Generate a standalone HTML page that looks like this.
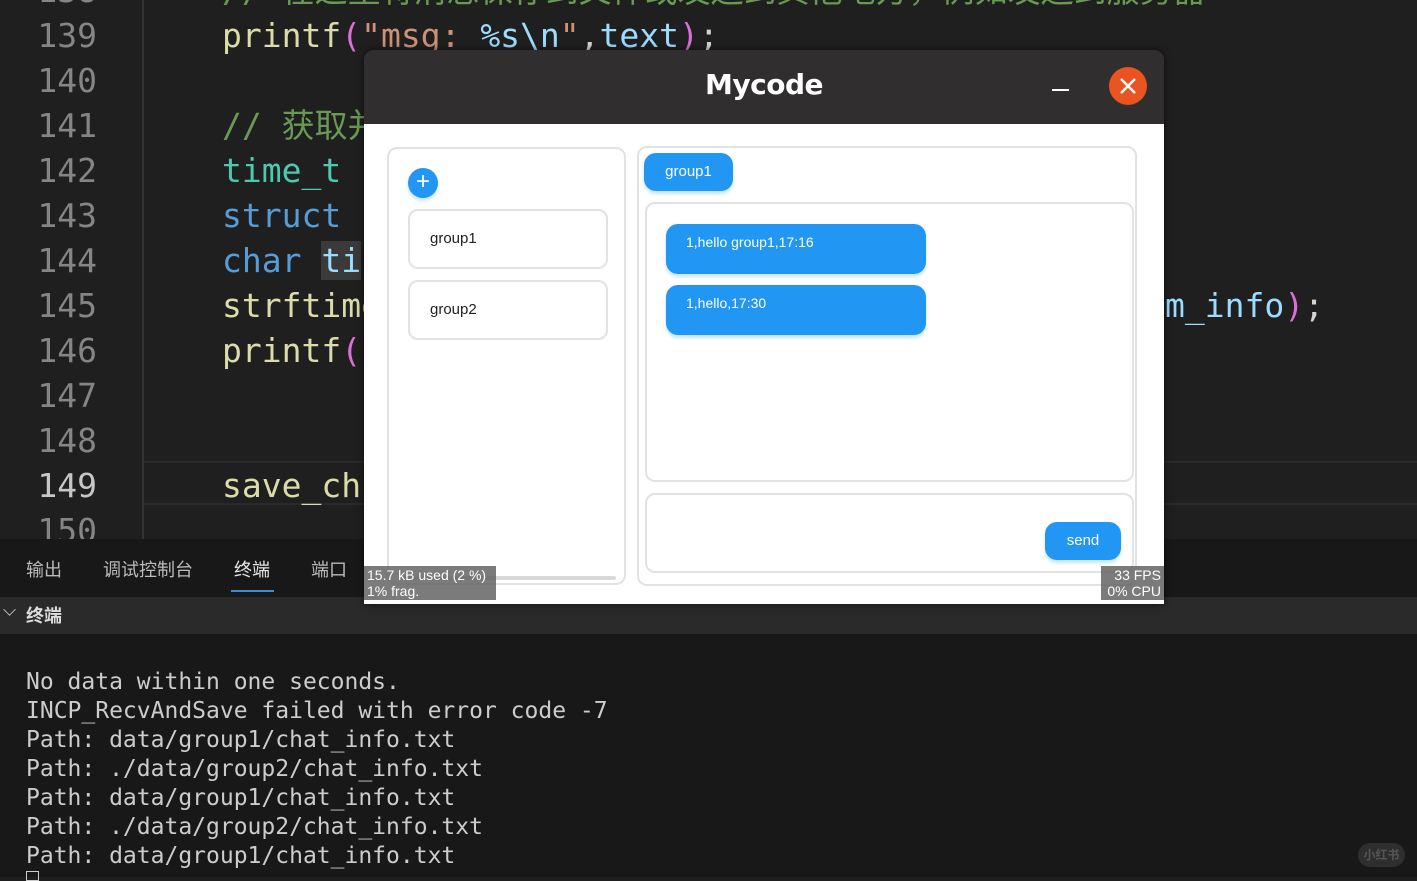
<!DOCTYPE html>
<html><head><meta charset="utf-8"><style>
*{margin:0;padding:0;box-sizing:border-box}
body{width:1417px;height:877px;overflow:hidden;background:#1f1f1f;position:relative;font-family:"Liberation Sans","Noto Sans CJK SC",sans-serif}
.abs{position:absolute}
.ln{position:absolute;left:0;width:97px;text-align:right;font:33px "DejaVu Sans Mono",monospace;color:#858585;line-height:45px}
.cd{position:absolute;left:222px;font:33px "DejaVu Sans Mono","Noto Sans CJK SC",monospace;line-height:45px;white-space:pre;color:#d4d4d4}
.fn{color:#dcdcaa}.st{color:#ce9178}.pp{color:#da70d6}.vr{color:#9cdcfe}.cm{color:#6a9955}.ty{color:#4ec9b0}.kw{color:#569cd6}
.term{position:absolute;left:26px;font:23px "DejaVu Sans Mono",monospace;color:#cccccc;line-height:29px;white-space:pre}
.box{position:absolute;border:2px solid #e2e2e2;border-radius:10px;background:#fff}
.btn{position:absolute;background:#2196f3;color:#fff;border-radius:12px;font-size:15px;box-shadow:0 3px 3px rgba(33,150,243,.25)}
.ov{position:absolute;background:rgba(100,100,100,.85);color:#fff;font-size:14px;line-height:16px;padding:1px 3px}
</style></head><body>
<div class="abs" style="left:142px;top:0;width:2px;height:540px;background:#333"></div>
<div class="abs" style="left:144px;top:461px;width:1273px;height:44px;border-top:2px solid #2a2a2a;border-bottom:2px solid #2a2a2a"></div>
<div class="ln" style="top:-32px">138</div>
<div class="ln" style="top:13px">139</div>
<div class="ln" style="top:58px">140</div>
<div class="ln" style="top:103px">141</div>
<div class="ln" style="top:148px">142</div>
<div class="ln" style="top:193px">143</div>
<div class="ln" style="top:238px">144</div>
<div class="ln" style="top:283px">145</div>
<div class="ln" style="top:328px">146</div>
<div class="ln" style="top:373px">147</div>
<div class="ln" style="top:418px">148</div>
<div class="ln" style="top:463px;color:#c6c6c6">149</div>
<div class="ln" style="top:508px;height:31px;overflow:hidden">150</div>
<div class="cd cm" style="top:-32px">// 在这里将消息保存到文件或发送到其他地方，例如发送到服务器</div>
<div class="cd" style="top:13px"><span class="fn">printf</span><span class="pp">(</span><span class="st">"msg: </span><span class="vr">%s\n</span><span class="st">"</span>,<span class="vr">text</span><span class="pp">)</span>;</div>
<div class="cd cm" style="top:103px">// 获取并格式化当前时间</div>
<div class="cd ty" style="top:148px">time_t</div>
<div class="cd kw" style="top:193px">struct</div>
<div class="cd" style="top:238px"><span class="kw">char</span> <span class="vr" style="background:#3a3a3a">ti</span></div>
<div class="cd fn" style="top:283px">strftime</div>
<div class="cd" style="top:283px;left:1165px"><span class="vr">m_info</span><span class="pp">)</span>;</div>
<div class="cd" style="top:328px"><span class="fn">printf</span><span class="pp">(</span></div>
<div class="cd fn" style="top:463px">save_ch</div>

<div class="abs" style="left:0;top:539px;width:1417px;height:58px;background:#181818"></div>
<div class="abs" style="left:26px;top:556px;font-size:18px;color:#bbb">输出</div>
<div class="abs" style="left:103px;top:556px;font-size:18px;color:#bbb">调试控制台</div>
<div class="abs" style="left:234px;top:556px;font-size:18px;color:#e6e6e6">终端</div>
<div class="abs" style="left:231px;top:590px;width:43px;height:2px;background:#3c8ed8"></div>
<div class="abs" style="left:311px;top:556px;font-size:18px;color:#bbb">端口</div>
<div class="abs" style="left:0;top:597px;width:1417px;height:37px;background:#2a2a2a"></div>
<div class="abs" style="left:4px;top:604px;width:11px;height:11px;border-right:1.5px solid #ccc;border-bottom:1.5px solid #ccc;transform:rotate(45deg) scale(.8)"></div>
<div class="abs" style="left:26px;top:602px;font-size:18px;font-weight:bold;color:#ddd">终端</div>
<div class="abs" style="left:0;top:634px;width:1417px;height:243px;background:#181818"></div>
<div class="term" style="top:668px">No data within one seconds.
INCP_RecvAndSave failed with error code -7
Path: data/group1/chat_info.txt
Path: ./data/group2/chat_info.txt
Path: data/group1/chat_info.txt
Path: ./data/group2/chat_info.txt
Path: data/group1/chat_info.txt</div>
<div class="abs" style="left:26px;top:871px;width:13px;height:10px;border:1.5px solid #ccc"></div>
<div class="abs" style="left:1358px;top:843px;width:47px;height:24px;border-radius:12px;background:#2e2e2e;color:#555;font-size:12px;text-align:center;line-height:24px;font-weight:bold">小红书</div>

<div class="abs" style="left:364px;top:50px;width:800px;height:554px;border-radius:10px 10px 0 0;overflow:hidden;box-shadow:0 0 8px rgba(0,0,0,.6)">
 <div class="abs" style="left:0;top:0;width:800px;height:74px;background:#302e2e"></div>
 <div class="abs" style="left:0;top:18px;width:800px;text-align:center;color:#fff;font-size:28px;font-weight:bold;font-family:'DejaVu Sans',sans-serif;letter-spacing:-.5px">Mycode</div>
 <div class="abs" style="left:688px;top:39px;width:17px;height:2px;background:#fff"></div>
 <div class="abs" style="left:745px;top:17px;width:38px;height:38px;border-radius:50%;background:#e95420"></div>
 <svg class="abs" style="left:745px;top:17px" width="38" height="38"><path d="M12 12L26 26M26 12L12 26" stroke="#fff" stroke-width="2.4"/></svg>
 <div class="abs" style="left:0;top:74px;width:800px;height:480px;background:#fff"></div>
 <div class="box" style="left:23px;top:97px;width:239px;height:438px"></div>
 <div class="abs" style="left:36px;top:526px;width:216px;height:4px;border-radius:2px;background:#d8d8d8"></div>
 <div class="btn" style="left:44px;top:118px;width:30px;height:30px;border-radius:50%;text-align:center;line-height:28px;font-size:24px">+</div>
 <div class="box" style="left:44px;top:159px;width:200px;height:60px;font-size:15px;color:#222;padding:19px 20px">group1</div>
 <div class="box" style="left:44px;top:230px;width:200px;height:60px;font-size:15px;color:#222;padding:19px 20px">group2</div>
 <div class="box" style="left:273px;top:96px;width:500px;height:440px"></div>
 <div class="btn" style="left:280px;top:103px;width:89px;height:38px;text-align:center;line-height:38px">group1</div>
 <div class="box" style="left:281px;top:152px;width:489px;height:280px"></div>
 <div class="btn" style="left:302px;top:174px;width:260px;height:50px;font-size:14px;padding:10px 20px">1,hello group1,17:16</div>
 <div class="btn" style="left:302px;top:235px;width:260px;height:50px;font-size:14px;padding:10px 20px">1,hello,17:30</div>
 <div class="box" style="left:281px;top:443px;width:489px;height:80px"></div>
 <div class="btn" style="left:681px;top:472px;width:76px;height:38px;text-align:center;line-height:38px">send</div>
 <div class="ov" style="left:0;top:516px;width:132px">15.7 kB used (2 %)<br>1% frag.</div>
 <div class="ov" style="left:737px;top:516px;width:63px;text-align:right">33 FPS<br>0% CPU</div>
</div>
</body></html>
